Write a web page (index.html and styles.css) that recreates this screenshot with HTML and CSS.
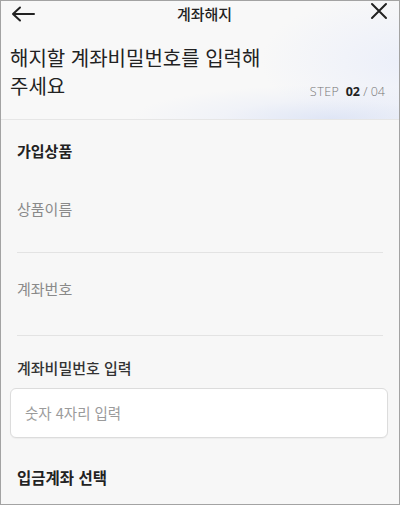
FILE: index.html
```html
<!DOCTYPE html>
<html lang="ko">
<head>
<meta charset="utf-8">
<title>계좌해지</title>
<link rel="stylesheet" href="styles.css">
</head>
<body>
<div class="app">
  <div class="top">
    <div class="topbar">
      <svg class="icon-back" width="24" height="16" viewBox="0 0 24 16">
        <path d="M2 8 H23 M9 1.5 L2 8 L9 14.5" fill="none" stroke="#222" stroke-width="2" stroke-linecap="round" stroke-linejoin="round"/>
      </svg>
      <div class="title">계좌해지</div>
      <svg class="icon-close" width="18" height="18" viewBox="0 0 18 18">
        <path d="M2 2 L16 16 M16 2 L2 16" fill="none" stroke="#222" stroke-width="2" stroke-linecap="round"/>
      </svg>
    </div>
    <div class="hero">
      <h1 class="heading">해지할 계좌비밀번호를 입력해<br>주세요</h1>
      <div class="step"><span class="step-label">STEP</span> <b class="step-cur">02</b><span class="step-total"> / 04</span></div>
    </div>
  </div>
  <div class="content">
    <div class="section-title">가입상품</div>
    <div class="field field-first"><span class="field-label">상품이름</span></div>
    <div class="field field-second"><span class="field-label">계좌번호</span></div>
    <div class="input-title">계좌비밀번호 입력</div>
    <div class="input-box"><span class="placeholder">숫자 4자리 입력</span></div>
    <div class="section-title section-bottom">입금계좌 선택</div>
  </div>
</div>
</body>
</html>
```
FILE: styles.css
```css
* { box-sizing: border-box; }
html, body { margin: 0; padding: 0; }
body {
  width: 400px;
  height: 505px;
  overflow: hidden;
  font-family: "Noto Sans CJK KR", "Noto Sans", sans-serif;
  color: #222;
}
.app {
  width: 400px;
  height: 505px;
  border: 1px solid #a3a3a3;
  background: #f7f7f7;
  overflow: hidden;
}
.top {
  border-bottom: 1px solid #e6e6e6;
  background:
    radial-gradient(ellipse 200px 34px at 330px 118px, rgba(214,223,245,0.75), rgba(226,232,248,0.35) 55%, rgba(248,248,248,0) 100%),
    radial-gradient(ellipse 150px 70px at 410px 60px, rgba(234,238,250,0.9), rgba(248,248,248,0) 100%),
    #f8f8f8;
}
.topbar {
  height: 25px;
  display: flex;
  align-items: center;
  justify-content: space-between;
  padding: 0 11px 0 10px;
}
.icon-back { display: block; margin-top: 1px; }
.icon-close { display: block; align-self: flex-start; margin-top: 1px; }
.title {
  font-size: 15px;
  font-weight: 500;
  line-height: 25px;
  margin-left: 4px;
}
.hero {
  display: flex;
  justify-content: space-between;
  align-items: flex-end;
  padding: 18px 14px 19px 9px;
}
.heading {
  margin: 0;
  font-size: 20px;
  font-weight: 400;
  line-height: 28px;
  color: #222;
}
.step {
  font-family: "Open Sans", "Liberation Sans", sans-serif;
  font-size: 12.5px;
  line-height: 16px;
  color: #8a8a8a;
  white-space: nowrap;
}
.step-label { letter-spacing: 0.5px; margin-right: 3px; font-weight: 300; color: #777; }
.step-total { font-weight: 300; color: #777; }
.step-cur { color: #222; font-weight: 700; }
.content {
  padding: 0 16px;
}
.section-title {
  margin-top: 20px;
  font-size: 15px;
  font-weight: 700;
  line-height: 22px;
  color: #222;
}
.field {
  border-bottom: 1px solid #e3e3e3;
}
.field-label {
  display: block;
  font-size: 15px;
  line-height: 22px;
  color: #8a8a8a;
}
.field-first { padding: 36px 0 32px; }
.field-second { padding: 25px 0 35px; }
.input-title {
  margin-top: 21px;
  font-size: 15px;
  font-weight: 500;
  line-height: 22px;
  color: #333;
}
.input-box {
  margin: 9px -5px 0 -7px;
  height: 50px;
  background: #fff;
  border: 1px solid #dcdcdc;
  border-radius: 6px;
  box-shadow: 0 1px 1px rgba(0,0,0,0.04);
  display: flex;
  align-items: center;
  padding-left: 14px;
}
.placeholder {
  font-size: 14.5px;
  line-height: 22px;
  color: #9b9b9b;
}
.section-bottom { margin-top: 28px; font-size: 15.5px; }
```
